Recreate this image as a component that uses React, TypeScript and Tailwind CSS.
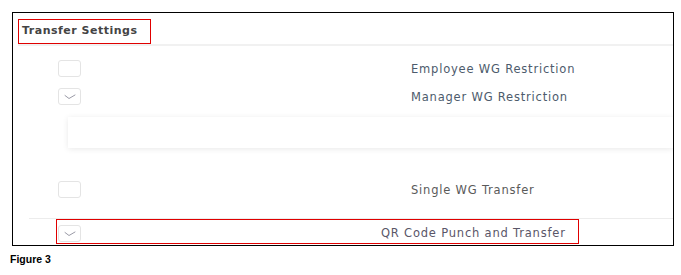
import React from "react";

function Check({ checked }: { checked?: boolean }) {
  return (
    <div className="w-[23px] h-[17px] shrink-0 rounded-[3px] border border-[#e4e4e4] bg-white flex items-center justify-center">
      {checked && (
        <svg width="12" height="6" viewBox="0 0 12 6" fill="none">
          <path d="M1 1.5 L5 4.5 L11 1" stroke="#9a9aa6" strokeWidth="1" strokeLinecap="round" strokeLinejoin="round" />
        </svg>
      )}
    </div>
  );
}

const labelCls =
  "text-[11.5px] leading-[14px] tracking-[0.8px] whitespace-nowrap [font-family:'DejaVu_Sans',sans-serif]";

export default function App() {
  return (
    <div className="w-[681px] h-[275px] bg-white pt-[12px] overflow-hidden">
      <div className="ml-[12px] w-[662px] h-[234px] border border-black overflow-hidden">
        <div className="pt-[6px] pl-[5px]">
          <div className="w-[133px] h-[25px] border border-[#e00000] flex items-center pl-[3px]">
            <span className="text-[11px] font-bold text-[#444] tracking-[0.5px] [font-family:'DejaVu_Sans',sans-serif]">
              Transfer Settings
            </span>
          </div>
        </div>
        <div className="ml-[5px] h-[2px] bg-[#f1f1f1]" />

        <div className="pl-[45px] pt-[14px] flex items-center">
          <Check />
          <span className={`${labelCls} ml-[330px] text-[#4d5b6c]`}>Employee WG Restriction</span>
        </div>
        <div className="pl-[45px] pt-[11px] flex items-center">
          <Check checked />
          <span className={`${labelCls} ml-[330px] text-[#4d5b6c]`}>Manager WG Restriction</span>
        </div>

        <div className="ml-[55px] mt-[12px] h-[31px] bg-white shadow-[0_1px_6px_rgba(0,0,0,0.09)]" />

        <div className="pl-[45px] pt-[33px] flex items-center">
          <Check />
          <span className={`${labelCls} ml-[330px] text-[#5a5a5a]`}>Single WG Transfer</span>
        </div>

        <div className="ml-[16px] mt-[20px] h-[1px] bg-[#ececec]" />

        <div className="ml-[43px] w-[523px] h-[25px] border border-[#e00000] pl-[1px] pt-[5px] flex items-start">
          <Check checked />
          <span className={`${labelCls} ml-[300px] mt-[1px] text-[#5a5668]`}>QR Code Punch and Transfer</span>
        </div>
      </div>
      <div className="pl-[10px] mt-[7px] text-[10.5px] leading-[12px] font-bold text-black [font-family:'Liberation_Sans',sans-serif]">
        Figure 3
      </div>
    </div>
  );
}
